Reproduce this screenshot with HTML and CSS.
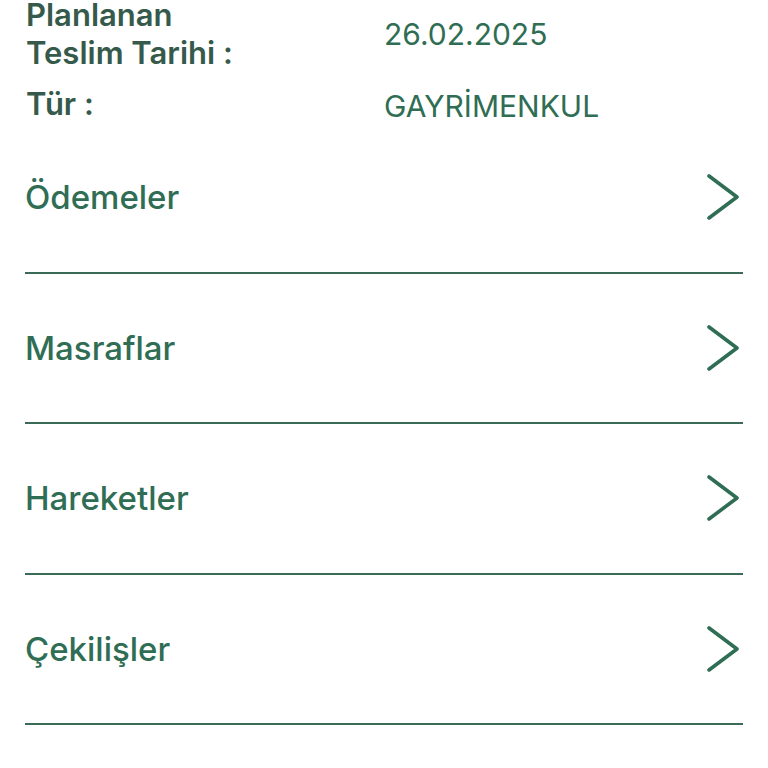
FILE: index.html
```html
<!DOCTYPE html>
<html lang="tr">
<head>
<meta charset="utf-8">
<title>Detay</title>
<link rel="stylesheet" href="styles.css">
</head>
<body>
<div class="page">
  <div class="info">
    <div class="info-row">
      <div class="label">Planlanan<br>Teslim Tarihi :</div>
      <div class="value">26.02.2025</div>
    </div>
    <div class="info-row second">
      <div class="label">Tür :</div>
      <div class="value low">GAYRİMENKUL</div>
    </div>
  </div>
  <ul class="menu">
    <li class="menu-item"><span class="menu-text">Ödemeler</span><svg class="chev" viewBox="0 0 34 48" width="34" height="48"><path d="M2 3 L30 24 L2 45"/></svg></li>
    <li class="menu-item"><span class="menu-text">Masraflar</span><svg class="chev" viewBox="0 0 34 48" width="34" height="48"><path d="M2 3 L30 24 L2 45"/></svg></li>
    <li class="menu-item"><span class="menu-text">Hareketler</span><svg class="chev" viewBox="0 0 34 48" width="34" height="48"><path d="M2 3 L30 24 L2 45"/></svg></li>
    <li class="menu-item"><span class="menu-text">Çekilişler</span><svg class="chev" viewBox="0 0 34 48" width="34" height="48"><path d="M2 3 L30 24 L2 45"/></svg></li>
  </ul>
</div>
</body>
</html>
```
FILE: styles.css
```css
html, body {
  margin: 0;
  padding: 0;
  background: #ffffff;
}
body {
  font-family: Inter, "Noto Sans", "Liberation Sans", sans-serif;
  overflow: hidden;
}
.page {
  padding: 0 25px;
}
.info {
  margin-top: -4px;
}
.info-row {
  display: flex;
  align-items: center;
}
.info-row.second {
  margin-top: 13px;
}
.label {
  width: 358px;
  padding-left: 1px;
  font-size: 31px;
  line-height: 38px;
  font-weight: 600;
  color: #355a4b;
}
.value {
  font-size: 30px;
  line-height: 38px;
  font-weight: 400;
  color: #2f6d54;
}
.value.low {
  position: relative;
  top: 2px;
}
.menu {
  list-style: none;
  margin: 0;
  padding: 0;
}
.menu-item {
  height: 148.5px;
  display: flex;
  align-items: center;
  justify-content: space-between;
  border-bottom: 2px solid #3a6b57;
  padding-right: 2px;
}
.menu-text {
  font-size: 33px;
  font-weight: 500;
  color: #2f6d54;
}
.chev path {
  fill: none;
  stroke: #2f6d54;
  stroke-width: 3.6;
  stroke-linecap: round;
  stroke-linejoin: round;
}
```
